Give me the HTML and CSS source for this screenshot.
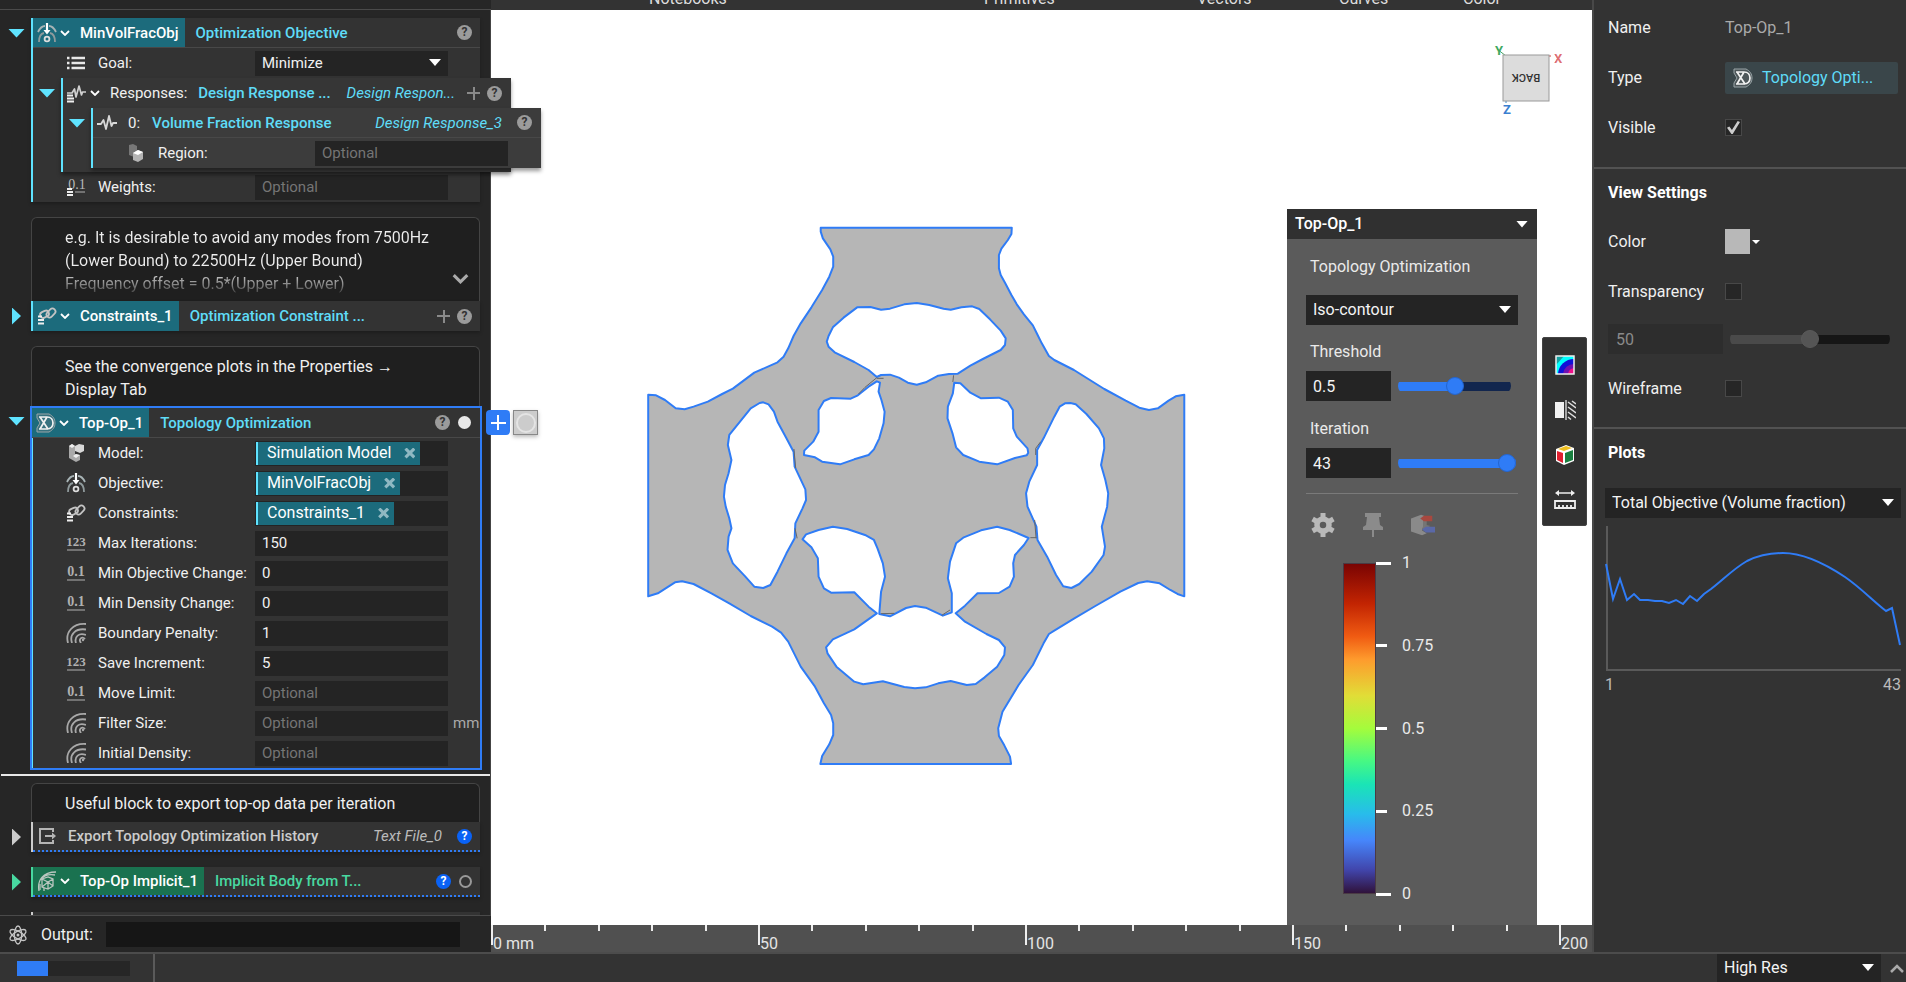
FILE: index.html
```html
<!DOCTYPE html>
<html lang="en">
<head>
<meta charset="utf-8">
<title>Topology Optimization</title>
<link rel="stylesheet" href="styles.css">
</head>
<body>
<svg class="defs" aria-hidden="true">
  <symbol id="i-objective" viewBox="0 0 20 20"><g fill="none" stroke="#a8b4b6" stroke-width="1.800"><path d="M1 9Q4 3 8 3M12 3q4 0 7 6"/><path d="M2 19q0-8 5-9M13 10q5 1 5 9" stroke="#8f9a9c"/><circle cx="10" cy="16" r="2.400" stroke="#ddd"/></g><path d="M10 0v8" stroke="#fff" stroke-width="2.200"/><path d="M6.500 7h7L10 11.500z" fill="#fff"/></symbol>
  <symbol id="i-list" viewBox="0 0 20 20"><path d="M1 5h2.500M1 10h2.500M1 15h2.500M5.500 5H19M5.500 10H19M5.500 15H19" stroke="#e8e8e8" stroke-width="2.600"/></symbol>
  <symbol id="i-pulse" viewBox="0 0 20 20"><path d="M0 11h4l2.500-4L9 16l3-13 2.500 10 1.500-3h4" fill="none" stroke="#d8d8d8" stroke-width="1.800" stroke-linejoin="round"/></symbol>
  <symbol id="i-pulses" viewBox="0 0 20 20"><path d="M1 10h5l2.500-4 1.500 8 3-11 2.500 9 1-3H20" fill="none" stroke="#d0d0d0" stroke-width="1.700" stroke-linejoin="round"/><path d="M1 12.500h6M1 15.500h7M1 18.500h7" stroke="#eee" stroke-width="2"/></symbol>
  <symbol id="i-body" viewBox="0 0 20 20"><path d="M3 2l4-1 4 2v6l-3 5-5-2z" fill="#777"/><path d="M7 10l5-3 5 2v7l-5 3-5-2z" fill="#b4b4b4"/><path d="M7 10l5-3 5 2-5 3z" fill="#fff"/></symbol>
  <symbol id="i-model" viewBox="0 0 20 20"><path d="M3 3l3-2 3 2v8l5 1v5l-4 2-7-4z" fill="#a9a9a9"/><path d="M3 3l3-2 3 2-3 2zM7 13l3-2 4 1-4 3z" fill="#eee"/><path d="M9 3l4-2 5 1v6l-4 2-5-2z" fill="#d8d8d8"/></symbol>
  <symbol id="i-link" viewBox="0 0 20 20"><g fill="none" stroke="#c4c4c4" stroke-width="1.800"><rect x="3" y="5" width="9" height="6" rx="3" transform="rotate(-25 8 8)"/><rect x="9" y="4" width="10" height="6" rx="3" transform="rotate(-45 14 7)"/></g><path d="M1 10.500h4M1 14h6M1 17.500h6" stroke="#eee" stroke-width="2.200"/></symbol>
  <symbol id="i-topop" viewBox="0 0 20 20"><path d="M1 1h12c4 2 6 5 6 9s-2 7-6 9H1v-4l3-5-3-5z" fill="#8884" stroke="#9aa5a8"/><path d="M3 4h8M3 16h8M4 4l8 12M11 4L4 16" fill="none" stroke="#f2f2f2" stroke-width="1.700"/><path d="M11 4c4 0 6 3 6 6s-2 6-6 6" fill="none" stroke="#f2f2f2" stroke-width="1.700"/></symbol>
  <symbol id="i-int" viewBox="0 0 20 20"><text x="10" y="13" text-anchor="middle" font-family="Liberation Serif, serif" font-size="13" font-weight="bold" fill="#b0b0b0">123</text><path d="M1 17h18" stroke="#888" stroke-width="1.500"/></symbol>
  <symbol id="i-real" viewBox="0 0 20 20"><text x="10" y="13" text-anchor="middle" font-family="Liberation Serif, serif" font-size="14" font-weight="bold" fill="#b0b0b0">0.1</text><path d="M1 17h18" stroke="#888" stroke-width="1.500"/></symbol>
  <symbol id="i-reals" viewBox="0 0 20 20"><text x="11" y="12" text-anchor="middle" font-family="Liberation Serif, serif" font-size="14" fill="#b9b9b9">0.1</text><path d="M9 15h10" stroke="#888" stroke-width="1.500"/><path d="M1 12h5M1 15h6M1 18h6" stroke="#eee" stroke-width="2"/></symbol>
  <symbol id="i-field" viewBox="0 0 20 20"><g fill="none" stroke="#a8a8a8" stroke-width="1.800"><path d="M2 20C-1 9 7 0 20 1"/><path d="M6 20C3 11 10 5 20 6.500"/><path d="M10 20c-2-6 3-11 10-8"/><path d="M15 20c-3-4 1-7 4-4"/></g><circle cx="17" cy="17" r="1.200" fill="#a8a8a8"/></symbol>
  <symbol id="i-export" viewBox="0 0 20 20"><path d="M16 6V3H3v14h13v-3M8 10h9" fill="none" stroke="#b5b5b5" stroke-width="2"/><path d="M15 6.500l4 3.500-4 3.500z" fill="#b5b5b5"/></symbol>
  <symbol id="i-implicit" viewBox="0 0 20 20"><g fill="none" stroke="#b9c6bf" stroke-width="1.300"><path d="M2 20C0 9 6 1 19 1M4 9C7 4 12 3 18 4"/><path d="M5 8l6-2 5 2v7l-5 3-6-2zM5 8l6 3 5-3M11 11v7M5 16l6-5 5 4"/><path d="M3 13v6M7 17v3"/></g></symbol>
  <symbol id="i-atom" viewBox="0 0 20 20"><g fill="none" stroke="#c4c4c4" stroke-width="1.300"><ellipse cx="10" cy="10" rx="3.600" ry="9"/><ellipse cx="10" cy="10" rx="3.600" ry="9" transform="rotate(60 10 10)"/><ellipse cx="10" cy="10" rx="3.600" ry="9" transform="rotate(120 10 10)"/></g><circle cx="10" cy="10" r="1.500" fill="#c4c4c4"/></symbol>
  <symbol id="i-chev" viewBox="0 0 10 6"><path d="M1 1l4 4 4-4" fill="none" stroke="currentColor" stroke-width="1.800"/></symbol>
</svg>

<div class="app">
  <aside class="tree">
    <div class="tree-top"></div>
    <div class="tree-scroll">
      <div class="node first">
        <div class="gutter"><button class="tri down" aria-label="Collapse"></button></div>
        <div class="block">
          <div class="head ruled">
            <span class="chip"><svg class="ico"><use href="#i-objective"/></svg><svg class="chev"><use href="#i-chev"/></svg>MinVolFracObj</span>
            <span class="title">Optimization Objective</span>
            <span class="tools"><button class="help">?</button></span>
          </div>
          <div class="row"><svg class="ico"><use href="#i-list"/></svg><label for="goal">Goal:</label>
            <span class="select"><select id="goal" class="field"><option>Minimize</option></select></span></div>
          <div class="node sub">
            <div class="gutter"><button class="tri down" aria-label="Collapse"></button></div>
            <div class="block pop">
              <div class="head list-head"><svg class="ico"><use href="#i-pulses"/></svg><svg class="chev"><use href="#i-chev"/></svg>
                <span class="lbl">Responses:</span><span class="title">Design Response ...</span>
                <span class="tools"><i class="ref">Design Respon...</i><button class="plus" aria-label="Add"></button><button class="help">?</button></span></div>
              <div class="node sub">
                <div class="gutter"><button class="tri down" aria-label="Collapse"></button></div>
                <div class="block pop deep">
                  <div class="head item-head ruled"><svg class="ico"><use href="#i-pulse"/></svg><span class="lbl">0:</span><span class="title">Volume Fraction Response</span>
                    <span class="tools"><i class="ref">Design Response_3</i><button class="help">?</button></span></div>
                  <div class="row"><svg class="ico"><use href="#i-body"/></svg><label for="region">Region:</label><input id="region" class="field" placeholder="Optional"></div>
                </div>
              </div>
            </div>
          </div>
          <div class="row"><svg class="ico"><use href="#i-reals"/></svg><label for="weights">Weights:</label><input id="weights" class="field" placeholder="Optional"></div>
        </div>
      </div>

      <div class="note faded"><p>e.g. It is desirable to avoid any modes from 7500Hz (Lower Bound) to 22500Hz (Upper Bound)<br>Frequency offset = 0.5*(Upper + Lower)</p><svg class="more"><use href="#i-chev"/></svg></div>
      <div class="node">
        <div class="gutter"><button class="tri right" aria-label="Expand"></button></div>
        <div class="block">
          <div class="head">
            <span class="chip"><svg class="ico"><use href="#i-link"/></svg><svg class="chev"><use href="#i-chev"/></svg>Constraints_1</span>
            <span class="title">Optimization Constraint ...</span>
            <span class="tools"><button class="plus" aria-label="Add"></button><button class="help">?</button></span>
          </div>
        </div>
      </div>

      <div class="note gap"><p>See the convergence plots in the Properties →<br>Display Tab</p></div>
      <div class="node">
        <div class="gutter"><button class="tri down" aria-label="Collapse"></button></div>
        <div class="block selected">
          <div class="head ruled">
            <span class="chip"><svg class="ico"><use href="#i-topop"/></svg><svg class="chev"><use href="#i-chev"/></svg>Top-Op_1</span>
            <span class="title">Topology Optimization</span>
            <span class="tools"><button class="help">?</button><span class="dot"></span></span>
          </div>
          <div class="row"><svg class="ico"><use href="#i-model"/></svg><span>Model:</span><span class="field"><span class="tag">Simulation Model<button class="x" aria-label="Remove"></button></span></span></div>
          <div class="row"><svg class="ico"><use href="#i-objective"/></svg><span>Objective:</span><span class="field"><span class="tag">MinVolFracObj<button class="x" aria-label="Remove"></button></span></span></div>
          <div class="row"><svg class="ico"><use href="#i-link"/></svg><span>Constraints:</span><span class="field"><span class="tag">Constraints_1<button class="x" aria-label="Remove"></button></span></span></div>
          <div class="row"><svg class="ico"><use href="#i-int"/></svg><label for="maxit">Max Iterations:</label><input id="maxit" class="field" value="150"></div>
          <div class="row"><svg class="ico"><use href="#i-real"/></svg><label for="minobj">Min Objective Change:</label><input id="minobj" class="field" value="0"></div>
          <div class="row"><svg class="ico"><use href="#i-real"/></svg><label for="minden">Min Density Change:</label><input id="minden" class="field" value="0"></div>
          <div class="row"><svg class="ico"><use href="#i-field"/></svg><label for="penalty">Boundary Penalty:</label><input id="penalty" class="field" value="1"></div>
          <div class="row"><svg class="ico"><use href="#i-int"/></svg><label for="saveinc">Save Increment:</label><input id="saveinc" class="field" value="5"></div>
          <div class="row"><svg class="ico"><use href="#i-real"/></svg><label for="move">Move Limit:</label><input id="move" class="field" placeholder="Optional"></div>
          <div class="row"><svg class="ico"><use href="#i-field"/></svg><label for="filter">Filter Size:</label><input id="filter" class="field" placeholder="Optional"><span class="unit">mm</span></div>
          <div class="row"><svg class="ico"><use href="#i-field"/></svg><label for="density">Initial Density:</label><input id="density" class="field" placeholder="Optional"></div>
          <div class="quick"><button class="add" aria-label="Add"></button><button class="ring-btn" aria-label="Preview"></button></div>
        </div>
      </div>
      <hr class="insert">

      <div class="note short"><p>Useful block to export top-op data per iteration</p></div>
      <div class="node">
        <div class="gutter"><button class="tri right grey" aria-label="Expand"></button></div>
        <div class="block grey-bar beta">
          <div class="head export-head"><svg class="ico"><use href="#i-export"/></svg><span class="title grey">Export Topology Optimization History</span>
            <span class="tools"><i class="ref grey">Text File_0</i><button class="help blue">?</button></span></div>
        </div>
      </div>
      <div class="node spaced">
        <div class="gutter"><button class="tri right green" aria-label="Expand"></button></div>
        <div class="block green-bar beta">
          <div class="head">
            <span class="chip green"><svg class="ico"><use href="#i-implicit"/></svg><svg class="chev"><use href="#i-chev"/></svg>Top-Op Implicit_1</span>
            <span class="title green">Implicit Body from T...</span>
            <span class="tools"><button class="help blue">?</button><span class="dot hollow"></span></span>
          </div>
        </div>
      </div>
      <div class="node spaced"><div class="gutter"></div><div class="block grey-bar"><div class="head"></div></div></div>
    </div>
    <div class="output"><svg class="ico"><use href="#i-atom"/></svg><label for="out">Output:</label><input id="out"></div>
  </aside>

  <main class="view">
    <nav class="ribbon"><span>Notebooks</span><span>Primitives</span><span>Vectors</span><span>Curves</span><span>Color</span></nav>
    <div class="canvas">
      <svg class="part" viewBox="0 0 560 564" role="img" aria-label="Optimized part">
        <g transform="scale(.35714 .33333)">
          <path class="solid" fill-rule="evenodd" d="M506 53L1041 53 1040 72 1030 90 1012 116 1005 135 1005 175 1010 195 1022 218 1040 255 1055 283 1075 313 1100 346 1112 372 1125 400 1145 438 1160 450 1215 480 1300 537 1360 572 1398 593 1425 600 1450 595 1480 572 1500 559 1524 554 1524 1159 1505 1152 1485 1140 1455 1120 1420 1114 1395 1119 1345 1145 1275 1188 1215 1226 1160 1262 1145 1272 1130 1300 1100 1365 1060 1425 1015 1505 1003 1555 1005 1578 1020 1606 1036 1640 1039 1662 505 1662 510 1638 530 1603 541 1575 541 1540 535 1515 515 1480 490 1430 450 1370 415 1295 395 1268 370 1250 310 1218 250 1180 200 1150 150 1122 118 1114 98 1117 75 1133 50 1150 23 1159 23 554 45 556 70 570 100 595 125 598 150 590 190 575 230 552 260 536 320 488 385 457 402 440 415 415 430 378 450 340 480 292 510 240 530 200 541 170 541 140 533 118 512 85 506 65Z
M523 395L528 378 540 352 570 323 608 292 645 291 675 299 700 296 740 283 775 279 810 285 850 296 870 299 900 292 930 289 950 297 980 328 1010 362 1024 385 1022 405 1010 420 960 447 925 467 890 491 865 492 835 497 800 517 775 524 750 518 725 503 700 494 675 495 663 501 640 480 600 456 545 427 528 410Z
M663 514L672 518 668 545 676 570 685 605 682 640 670 685 655 718 640 735 600 748 560 763 510 755 490 742 459 735 460 722 485 695 500 665 500 600 515 573 535 564 590 566 610 556 640 530Z
M880 518L897 520 925 548 955 565 1005 563 1030 575 1044 600 1045 655 1055 680 1085 715 1087 728 1083 736 1050 744 1000 763 950 755 905 735 885 712 875 670 861 625 862 590 876 550Z
M345 577L360 583 375 605 385 635 410 685 430 725 433 770 463 838 465 870 455 895 435 940 433 985 410 1030 385 1085 365 1125 345 1134 320 1130 295 1100 260 1060 245 1020 248 980 256 955 250 925 240 890 235 860 238 825 248 790 256 750 246 705 250 675 280 635 310 595 335 579Z
M1205 579L1220 583 1250 612 1285 655 1299 685 1300 715 1291 765 1303 810 1311 850 1308 890 1293 950 1302 1010 1298 1035 1265 1085 1230 1122 1208 1134 1185 1129 1165 1095 1140 1040 1113 990 1110 950 1085 890 1081 850 1090 815 1112 765 1112 720 1130 685 1160 620 1175 590 1190 580Z
M455 988L465 973 500 960 540 950 580 957 630 975 655 990 665 1015 680 1060 686 1100 675 1145 670 1212 700 1219 745 1194 770 1188 800 1193 848 1217 873 1207 873 1150 862 1105 868 1055 885 1000 905 983 955 961 1000 950 1035 960 1088 984 1075 1005 1050 1035 1045 1060 1047 1100 1035 1130 1005 1149 945 1150 910 1187 884 1210 910 1235 970 1272 1005 1290 1022 1312 1020 1335 1000 1370 965 1402 940 1422 915 1425 870 1413 835 1420 800 1432 770 1435 740 1431 680 1414 625 1423 600 1415 550 1370 525 1330 521 1312 540 1288 600 1258 663 1210 640 1190 600 1147 535 1148 515 1135 500 1100 498 1045 480 1012Z"/>
          <path class="seam" d="M663 503L630 532 612 552M878 496L876 516M431 717L436 775M434 955L440 985M1105 930L1109 985M1093 983H1110M675 1211L712 1210M845 1216L868 1200M1108 735V715L1122 695M663 505H682"/>
        </g>
      </svg>
      <svg class="compass" viewBox="0 0 76 76" role="img" aria-label="View cube">
        <path d="M15 15L6 8" stroke="#4aa564" stroke-width="1"/><path d="M56 15h4" stroke="#c44" stroke-width="1"/><path d="M15 60v2" stroke="#38c" stroke-width="1"/>
        <rect x="12" y="14" width="46" height="46" fill="#dcdcdc" stroke="#9a9a9a"/>
        <text x="35" y="41" class="face" transform="rotate(180 35 37)">BACK</text>
        <text x="4" y="14" class="ax y">Y</text><text x="63" y="22" class="ax x">X</text><text x="12" y="73" class="ax z">Z</text>
      </svg>

      <section class="legend">
        <header><span>Top-Op_1</span><span class="tri down small white"></span></header>
        <div class="legend-body">
          <p>Topology Optimization</p>
          <span class="select"><select class="box" aria-label="Display mode"><option>Iso-contour</option></select></span>
          <label for="thr">Threshold</label>
          <div class="pair"><input id="thr" class="box" value="0.5"><input type="range" class="range half" aria-label="Threshold slider" min="0" max="100" value="50"></div>
          <label for="itr">Iteration</label>
          <div class="pair"><input id="itr" class="box" value="43"><input type="range" class="range full" aria-label="Iteration slider" min="1" max="43" value="43"></div>
          <hr>
          <div class="acts">
            <button aria-label="Settings"><svg viewBox="0 0 24 24"><circle cx="12" cy="12" r="6" fill="none" stroke="#b9b9b9" stroke-width="5.500"/><path d="M12 0v5M12 19v5M1.600 6l4.300 2.500M18.100 15.500l4.300 2.500M1.600 18l4.300-2.500M18.100 8.500L22.400 6" stroke="#b9b9b9" stroke-width="5"/></svg></button>
            <button aria-label="Pin"><svg viewBox="0 0 24 24"><path d="M4 0h16v4h-2l1 8 3 2v3H2v-3l3-2 1-8H4z" fill="#8b8b8b"/><path d="M12 17v7" stroke="#8b8b8b" stroke-width="2"/></svg></button>
            <button aria-label="Probe"><svg viewBox="0 0 26 24"><path d="M0 5l11-4 6 2-4 5v6l-1 4 5 3-5 2-12-4z" fill="#8a8a8a"/><path d="M13 7l4-1v6l4 1-6 3-2 2z" fill="#757575"/><path d="M10 5l4-3h9v6h-9z" fill="#a8483f"/><path d="M12 17l4-3h10v6H16z" fill="#5a68a8"/></svg></button>
          </div>
          <div class="scale"><div class="bar"></div><ol><li>1</li><li>0.75</li><li>0.5</li><li>0.25</li><li>0</li></ol></div>
        </div>
      </section>

      <div class="dock">
        <button aria-label="Field colors"><svg viewBox="0 0 22 22"><rect x="2" y="2" width="18" height="18" fill="#0ff"/><path d="M2 2h8L2 11z" fill="#16a0a0"/><path d="M4 20A16 16 0 0 1 20 5V20z" fill="#1010d8"/><path d="M9 20A11 11 0 0 1 20 10V20z" fill="#7010b0"/><path d="M14 20a7 7 0 0 1 6-6v6z" fill="#f0108a"/><rect x="2" y="2" width="18" height="18" fill="none" stroke="#eee" stroke-width="1.500"/></svg></button>
        <button aria-label="Section"><svg viewBox="0 0 22 22"><path d="M1 3h9v16H1z" fill="#f2f2f2"/><path d="M12 1v20" stroke="#ccc" stroke-width="1.500"/><path d="M14 3l8 6M14 8l8 6M14 13l8 6M14 18l3 2.500M18 2l4 3" stroke="#ddd" stroke-width="1.500"/></svg></button>
        <button aria-label="View"><svg viewBox="0 0 22 22"><path d="M2 5l10-4 8 3v13l-10 4-8-4z" fill="#fff"/><path d="M4 5l8-3 6 2-8 3z" fill="#f0c020"/><path d="M3 7l6 2v10l-6-3z" fill="#e02030"/><path d="M11 9l8-3v10l-8 3z" fill="#1a8040"/></svg></button>
        <button aria-label="Measure"><svg viewBox="0 0 22 22"><path d="M3 4h16" stroke="#eee" stroke-width="1.500"/><path d="M1 4l4-3v6zM21 4l-4-3v6z" fill="#eee"/><path d="M1 12h20v7H1zM5 19v-3M9 19v-3M13 19v-3M17 19v-3" fill="none" stroke="#eee" stroke-width="1.800"/></svg></button>
      </div>
    </div>
    <div class="ruler">
      <div class="span"><i></i><i></i><i></i><i></i><i></i><b>0 mm</b></div>
      <div class="span"><i></i><i></i><i></i><i></i><i></i><b>50</b></div>
      <div class="span"><i></i><i></i><i></i><i></i><i></i><b>100</b></div>
      <div class="span"><i></i><i></i><i></i><i></i><i></i><b>150</b></div>
      <div class="span"><i></i><i></i><i></i><i></i><i></i><b>200</b></div>
    </div>
  </main>

  <aside class="props">
    <section class="general">
      <div class="prop"><span>Name</span><span class="dim">Top-Op_1</span></div>
      <div class="prop"><span>Type</span><span class="type"><svg class="ico"><use href="#i-topop"/></svg>Topology Opti...</span></div>
      <div class="prop"><label for="vis">Visible</label><input id="vis" type="checkbox" checked></div>
    </section>
    <section class="settings">
      <h2>View Settings</h2>
      <div class="prop"><span>Color</span><button class="swatch" aria-label="Color"></button></div>
      <div class="prop"><label for="transp">Transparency</label><input id="transp" type="checkbox"></div>
      <div class="alpha"><input class="box" value="50" aria-label="Transparency value" disabled><input type="range" class="range half mono" aria-label="Transparency slider" value="50" disabled></div>
      <div class="prop"><label for="wire">Wireframe</label><input id="wire" type="checkbox"></div>
    </section>
    <section class="plots">
      <h2>Plots</h2>
      <span class="select"><select class="box" aria-label="Plot"><option>Total Objective (Volume fraction)</option></select></span>
      <svg class="plot" viewBox="0 0 296 148" preserveAspectRatio="none" role="img" aria-label="Objective plot">
        <path d="M2 3V147H296" fill="none" stroke="#5a5a5a" stroke-width="2"/>
        <path d="M1 41L8 76 15 56 22 77 29 71 35 77 43 77 50 78 57 78 64 80 71 77 78 81 85 73 92 78 99 71 106 66C118 57 128 46 142 38C156 31 168 30 178 30C200 30 222 42 240 54C256 65 268 78 281 88L287 85 295 122" fill="none" stroke="#2f7cf6" stroke-width="2"/>
      </svg>
      <div class="axis"><span>1</span><span>43</span></div>
    </section>
  </aside>

  <footer class="status">
    <div class="progress"><span style="width:27%"></span></div>
    <span class="sep"></span>
    <span class="select res"><select class="box" aria-label="Resolution"><option>High Res</option></select></span>
    <button class="up" aria-label="Expand"><svg viewBox="0 0 14 9"><path d="M1 8l6-6 6 6" fill="none" stroke="#aaa" stroke-width="2.500"/></svg></button>
  </footer>
</div>
</body>
</html>
```
FILE: styles.css
```css
* { box-sizing: border-box; }
body { margin: 0; background: #333; color: #f0f0f0; font: 16px/20px Roboto, "Liberation Sans", sans-serif; }
button, input, select { font: inherit; color: inherit; border: 0; padding: 0; margin: 0; background: none; border-radius: 0; }
p, h2, ol, hr { margin: 0; padding: 0; border: 0; }
.defs { display: none; }

.app { display: grid; grid-template-columns: 491px minmax(0, 1fr) 314px; grid-template-rows: minmax(0, 1fr) 30px; height: 100vh; overflow: hidden; }

/* block tree */
.tree { display: flex; flex-direction: column; min-height: 0; background: #262626; font-size: 15px; position: relative; z-index: 2; }
.tree-top { flex: none; height: 10px; border-bottom: 1px solid #4a4a4a; }
.tree-scroll { flex: 1; min-height: 0; overflow-y: clip; border-right: 1px solid #444; }
.node { display: grid; grid-template-columns: 31px 449px; }
.node.first { padding-top: 8px; }
.node.sub { grid-template-columns: 28px 450px; }
.node.spaced { padding-top: 15px; }
.gutter { display: grid; place-items: center; height: 30px; padding-left: 2px; }
.sub > .gutter { padding: 0; }
.tri { width: 17px; height: 9px; background: #5fe3ff; clip-path: polygon(0 0, 100% 0, 50% 100%); }
.tri.right { width: 9px; height: 17px; clip-path: polygon(0 0, 100% 50%, 0 100%); }
.tri.small { width: 12px; height: 7px; }
.tri.grey { background: #ccc; }
.tri.green { background: #48d8a0; }
.tri.white { background: #fff; }
.block { position: relative; background: #333; border-left: 2px solid #5fe3ff; box-shadow: 0 2px 3px #1116; }
.block.grey-bar { border-color: #ccc; }
.block.green-bar { border-color: #48d8a0; }
.pop { background: #363636; padding-bottom: 4px; box-shadow: 0 3px 4px #0006; z-index: 1; }
.pop.deep { background: #3c3c3c; padding-bottom: 0; }
.head { display: flex; align-items: center; height: 30px; font-weight: 500; }
.head.ruled { border-bottom: 1px solid #484848; }
.beta > .head { border-bottom: 2px dotted #2f7cf6; }
.chip { display: flex; align-items: center; align-self: stretch; padding: 0 6px 0 4px; background: #1c6b7c; color: #fff; margin-right: 11px; }
.chip.green { background: #1a7250; }
.chip .chev { margin: 0 10px 0 3px; }
.ico { flex: none; width: 20px; height: 20px; }
.chev { flex: none; width: 10px; height: 6px; color: #fff; }
.title { color: #5fdcf8; }
.title.green { color: #48d8a0; }
.title.grey { color: #ccc; }
.ref { color: #5fdcf8; font-weight: 400; }
.ref.grey { color: #bbb; }
.lbl { font-weight: 400; }
.tools { display: flex; align-items: center; gap: 7px; margin-left: auto; padding-right: 8px; }
.pop .tools { padding-right: 9px; }
.help { width: 15px; height: 15px; border-radius: 50%; background: #9b9b9b; color: #333; font-size: 12px; line-height: 15px; font-weight: 700; text-align: center; }
.help.blue { background: #0a62f5; color: #fff; }
.ref + .help { margin-left: 8px; }
.plus { width: 13px; height: 13px; background: linear-gradient(#8a8a8a 0 0) center / 100% 2px no-repeat, linear-gradient(#8a8a8a 0 0) center / 2px 100% no-repeat; }
.ref + .plus { margin-left: 5px; }
.dot { width: 13px; height: 13px; border-radius: 50%; background: #e8e8e8; margin-left: 1px; }
.dot.hollow { background: none; border: 2px solid #999; }
.list-head { padding-left: 3px; }
.list-head .chev { margin: 0 10px 0 4px; }
.list-head .lbl { margin-right: 11px; }
.item-head { padding-left: 4px; }
.item-head .lbl { margin: 0 12px 0 11px; }
.export-head { padding-left: 4px; }
.export-head .title { margin-left: 11px; }
.row { display: grid; grid-template-columns: 32px 157px 193px 1fr; align-items: center; height: 30px; padding-left: 33px; }
.field { display: flex; align-items: center; width: 100%; height: 25px; padding: 0 7px; background: #242424; border: 0; }
.field::placeholder { color: #757575; opacity: 1; }
span.field { padding: 0 1px; }
.tag { display: flex; align-items: center; height: 23px; padding: 0 5px 0 9px; border-left: 2px solid #5fe3ff; background: #1c6b7c; color: #fff; font-size: 16px; }
.x { width: 11px; height: 11px; margin-left: 13px; background: #8fb8c2; clip-path: polygon(20% 0, 50% 30%, 80% 0, 100% 20%, 70% 50%, 100% 80%, 80% 100%, 50% 70%, 20% 100%, 0 80%, 30% 50%, 0 20%); }
.unit { padding-left: 5px; color: #aaa; }
.select { position: relative; display: block; }
.select select { appearance: none; width: 100%; }
.select::after { content: ""; position: absolute; right: 7px; top: 50%; width: 12px; height: 7px; margin-top: -4px; background: #fff; clip-path: polygon(0 0, 100% 0, 50% 100%); pointer-events: none; }
.note { position: relative; width: 449px; margin: 15px 0 0 31px; padding: 8px 32px 0 33px; border: 1px solid #444; border-bottom: 0; border-radius: 6px 6px 0 0; background: #1f1f1f; line-height: 23px; font-size: 16px; }
.note.faded { height: 84px; overflow: hidden; }
.note.faded p { height: 72px; margin-right: -20px; background: linear-gradient(#eee 44px, #333 70px); background-clip: text; color: transparent; }
.note.gap { height: 60px; }
.note.short { height: 39px; margin-top: 7px; }
.more { position: absolute; right: 10px; bottom: 17px; width: 17px; height: 11px; color: #aaa; }
.selected { margin-left: -1px; margin-right: -2px; border: 2px solid #2f7cf6; z-index: 1; box-shadow: inset 1px 0 #5fe3ff; }
.selected .row { padding-left: 34px; }
.selected .tools { padding-right: 9px; }
.quick { position: absolute; top: 2px; left: 454px; display: flex; gap: 3px; }
.add { width: 24px; height: 25px; border-radius: 4px; background: linear-gradient(#fff 0 0) center / 15px 2px no-repeat, linear-gradient(#fff 0 0) center / 2px 15px no-repeat, #2f7cf6; }
.ring-btn { display: grid; place-items: center; width: 25px; height: 25px; border: 1px solid #888; background: #ccc; box-shadow: 0 2px 4px #0004; }
.ring-btn::before { content: ""; width: 16px; height: 16px; border: 2px solid #e4e4e4; border-radius: 50%; }
.insert { height: 2px; margin: 4px 0 0 1px; background: #e8e8e8; }
.output { flex: none; display: flex; align-items: center; height: 37px; padding: 1px 31px 0 8px; border-top: 1px solid #4a4a4a; font-size: 16px; }
.output label { margin: 0 13px 0 13px; }
.output input { flex: 1; height: 25px; background: #161616; }

/* viewport */
.view { display: flex; flex-direction: column; min-width: 0; background: #fff; }
.ribbon { flex: none; display: flex; height: 10px; padding-left: 158px; overflow: hidden; background: #333; color: #ddd; align-items: flex-end; line-height: 19px; }
.ribbon span { flex: none; margin-bottom: 2px; }
.ribbon span:nth-child(1) { width: 335px; }
.ribbon span:nth-child(2) { width: 213px; }
.ribbon span:nth-child(3) { width: 142px; }
.ribbon span:nth-child(4) { width: 124px; }
.canvas { position: relative; flex: 1; min-height: 0; }
.part { position: absolute; left: 149px; top: 200px; width: 560px; height: 564px; }
.solid { fill: #b6b6b6; stroke: #2f7cf6; stroke-width: 2; stroke-linejoin: round; vector-effect: non-scaling-stroke; }
.seam { fill: none; stroke: #666; stroke-width: 1; vector-effect: non-scaling-stroke; }
.compass { position: absolute; right: 25px; top: 31px; width: 76px; height: 76px; }
.face { font-size: 11px; font-weight: 500; text-anchor: middle; fill: #333; }
.ax { font-size: 13px; font-weight: 700; }
.ax.x { fill: #e07070; }
.ax.y { fill: #3fa860; }
.ax.z { fill: #3a80d0; }
.legend { position: absolute; right: 55px; top: 199px; bottom: 0; width: 250px; background: #5b5b5b; color: #eaeaea; }
.legend header { display: flex; align-items: center; justify-content: space-between; height: 30px; padding: 0 9px 0 8px; background: #303030; font-weight: 500; color: #fff; }
.legend-body { display: flex; flex-direction: column; padding: 18px 19px 0; }
.legend-body p, .legend-body label { padding-left: 4px; }
.box { height: 30px; padding: 0 7px; background: #242424; color: #f4f4f4; }
.legend .select { margin: 18px 0 17px; }
.pair { display: flex; align-items: center; gap: 7px; margin: 9px 0 18px; }
.pair .box { width: 85px; }
.range { appearance: none; height: 18px; background: linear-gradient(90deg, #2f7cf6 50%, #12264e 50%) center / 100% 9px no-repeat; border-radius: 9px; }
.pair .half { width: 113px; }
.pair .full { width: 118px; margin-right: -5px; }
.range.full { background-image: linear-gradient(#2f7cf6 0 0); }
.range::-webkit-slider-thumb { appearance: none; width: 18px; height: 18px; border-radius: 50%; background: #2f7cf6; border: 1px solid #2465d0; }
.legend hr { height: 1px; margin: -3px 0 19px; background: #7a7a7a; }
.acts { display: flex; gap: 26px; padding-left: 5px; }
.acts button, .acts svg { display: block; width: 24px; height: 24px; }
.scale { display: flex; height: 331px; margin: 26px 0 0 37px; }
.bar { width: 33px; border: 1px solid #4a3a44; background: linear-gradient(#7a0403, #c22402 12%, #f05b12 22%, #fe9b2d 29%, #e1dd37 40%, #a4fc3c 50%, #46f884 60%, #1ae4b6 67%, #28bceb 76%, #4686fb 84%, #4145ab 93%, #30123b); }
.scale ol { display: flex; flex-direction: column; justify-content: space-between; margin: -10px 0; list-style: none; }
.scale li { display: flex; align-items: center; gap: 15px; height: 20px; }
.scale li::before { content: ""; width: 11px; height: 3px; background: #fff; }
.scale li:first-child::before, .scale li:last-child::before { width: 15px; margin-right: -4px; }
.dock { position: absolute; right: 5px; top: 327px; display: grid; gap: 23px; justify-items: center; width: 45px; padding: 16px 0 14px; background: #323232; border: 1px solid #444; border-radius: 2px; }
.dock button, .dock svg { display: block; width: 22px; height: 22px; }
.ruler { flex: none; display: flex; height: 27px; overflow: hidden; background: #505050; color: #e4e4e4; }
.span { position: relative; flex: 0 0 267px; display: grid; grid-template-columns: repeat(5, 1fr); }
.span i { height: 6px; border-left: 2px solid #eee; }
.span i:first-child { height: 20px; }
.span b { position: absolute; left: 2px; top: 9px; font-weight: 400; line-height: 19px; }

/* properties */
.props { background: #333; border-left: 2px solid #484848; min-width: 0; }
.props section { padding: 0 8px 0 14px; border-bottom: 2px solid #525252; }
.props .general { height: 169px; padding-top: 10px; }
.props .settings { height: 260px; padding-top: 14px; }
.props .plots { padding: 0 5px 0 11px; border: 0; }
.prop { display: grid; grid-template-columns: 117px minmax(0, 1fr); align-items: center; height: 35px; margin-bottom: 15px; }
.prop .dim { color: #aaa; }
.type { display: flex; align-items: center; gap: 9px; height: 32px; padding-left: 8px; background: #3a464a; color: #5fdcf8; border-radius: 2px; }
h2 { font-size: 16px; line-height: 20px; font-weight: 700; color: #fff; margin-bottom: 21px; }
input[type=checkbox] { appearance: none; display: grid; place-items: center; width: 17px; height: 17px; background: #262626; border: 1px solid #484848; }
input[type=checkbox]:checked::before { content: ""; width: 13px; height: 13px; background: #ccc; clip-path: polygon(0 52%, 18% 42%, 38% 70%, 82% 0, 100% 8%, 44% 100%, 34% 100%); }
.swatch { position: relative; width: 25px; height: 25px; background: #b8b8b8; }
.swatch::after { content: ""; position: absolute; left: 27px; top: 11px; width: 8px; height: 4px; background: #fff; clip-path: polygon(0 0, 100% 0, 50% 100%); }
.alpha { display: flex; align-items: center; gap: 7px; height: 30px; margin: 0 0 17px; padding-right: 8px; }
.alpha .box { width: 115px; background: #2d2d2d; color: #8a8a8a; padding: 0 8px; }
.alpha .range { flex: 1; min-width: 0; }
.mono { background-image: linear-gradient(90deg, #4a4a4a 50%, #161616 50%); }
.mono::-webkit-slider-thumb { background: #555; border-color: #5a5a5a; }
.plots h2 { margin: 14px 3px 25px; }
.plot { display: block; width: 100%; height: 148px; margin-top: 5px; }
.axis { display: flex; justify-content: space-between; margin-top: 4px; color: #bbb; }

/* status bar */
.status { grid-column: 1 / -1; display: flex; align-items: center; border-top: 2px solid #4c4c4c; background: #333; position: relative; z-index: 3; }
.progress { width: 113px; height: 15px; margin-left: 17px; background: #262626; }
.progress span { display: block; height: 100%; background: #2f7cf6; }
.sep { width: 2px; align-self: stretch; margin-left: 23px; background: #5a5a5a; }
.res { width: 164px; margin-left: auto; }
.res .box { height: 28px; }
.up { width: 14px; height: 9px; margin: 0 2px 0 9px; }
.up svg { display: block; }
```
